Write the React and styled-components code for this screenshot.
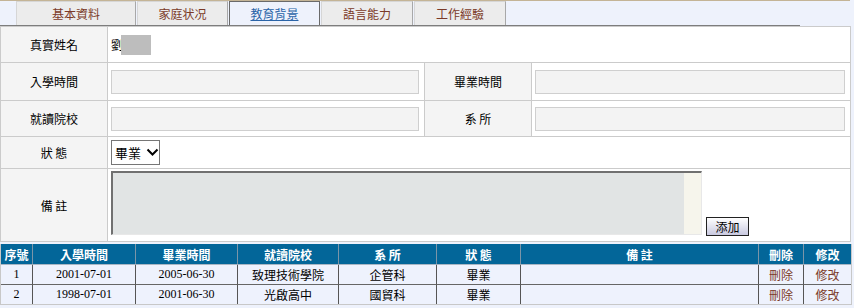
import React from "react";
import styled, { createGlobalStyle } from "styled-components";

const Global = createGlobalStyle`
  html, body { margin: 0; padding: 0; }
  body {
    background: #eef2fc;
    font-family: "Noto Sans CJK TC", "Liberation Sans", sans-serif;
    font-size: 12px;
    color: #000;
  }
`;

const Page = styled.div`
  width: 850px;
  border-top: 1px solid #c4b496;
`;

const TabBar = styled.div`
  display: flex;
  gap: 1px;
  width: 784px;
  height: 24px;
  padding-left: 16px;
  border-bottom: 1px solid #7d7d7d;
`;

const Tab = styled.div`
  box-sizing: border-box;
  width: ${(p) => p.$w}px;
  height: 24px;
  display: flex;
  align-items: center;
  justify-content: center;
  font-size: 12px;
  background: ${(p) => (p.$active ? "#eef2fc" : "#ececec")};
  border: 1px solid ${(p) => (p.$active ? "#6a6a6a" : "#d6d6d6")};
  border-right-color: ${(p) => (p.$active ? "#6a6a6a" : "#a8a8a8")};
  border-bottom: none;
  color: ${(p) => (p.$active ? "#2a64a8" : "#7b3a28")};
  text-decoration: ${(p) => (p.$active ? "underline" : "none")};
`;

const FormTable = styled.table`
  width: 850px;
  border-collapse: collapse;
  background: #fff;
  table-layout: fixed;
  td {
    border: 1px solid #cbcbcb;
    padding: 0;
  }
`;

const Label = styled.td`
  background: #f4f4f4;
  text-align: center;
  height: ${(p) => p.$h}px;
  font-size: 12px;
`;

const Value = styled.td`
  padding: 0 0 0 3px !important;
  vertical-align: ${(p) => p.$valign || "middle"};
`;

const TextInput = styled.input`
  box-sizing: border-box;
  display: block;
  width: ${(p) => p.$w}px;
  height: 24px;
  border: 1px solid #cfcfcf;
  background: #f3f3f3;
  margin: 0;
  padding: 0 4px;
`;

const NameWrap = styled.div`
  display: flex;
  align-items: center;
`;

const Redacted = styled.span`
  display: inline-block;
  width: 30px;
  height: 20px;
  margin-left: -2px;
  background: #bdbdbd;
  filter: blur(0.6px);
`;

const Select = styled.div`
  box-sizing: border-box;
  display: inline-flex;
  align-items: center;
  gap: 5px;
  width: 49px;
  height: 25px;
  padding-left: 3px;
  border: 1px solid #767676;
  background: #fff;
  font-size: 13px;
`;

const NoteRow = styled.div`
  display: flex;
  align-items: flex-end;
  gap: 4px;
  padding: 2px 0 2px;
`;

const NoteBox = styled.div`
  box-sizing: border-box;
  display: flex;
  width: 591px;
  height: 64px;
  border: 1px solid #e8e8e8;
  border-top: 2px solid #707070;
  border-left: 2px solid #707070;
`;

const Note = styled.textarea`
  flex: 1;
  margin: 0;
  padding: 2px;
  resize: none;
  border: none;
  outline: none;
  background: #e1e4e4;
`;

const ScrollTrack = styled.div`
  width: 17px;
  background: #f6f5ec;
`;

const AddButton = styled.button`
  box-sizing: border-box;
  width: 43px;
  height: 19px;
  padding: 0;
  margin-bottom: -1px;
  border: 1px solid #222;
  background: linear-gradient(#ffffff, #c9c9e0);
  font-family: "Noto Sans CJK TC", sans-serif;
  font-size: 12px;
  line-height: 16px;
  color: #000;
`;

const ListTable = styled.table`
  margin-top: 2px;
  width: 850px;
  table-layout: fixed;
  border-collapse: separate;
  border-spacing: 0;
  border: 1px solid #c8c8c8;
  border-top: none;
`;

const Th = styled.th`
  background: #036699;
  color: #fff;
  font-weight: bold;
  font-size: 12px;
  height: 20px;
  padding: 0;
  border-right: 1px solid #7b95a8;
  border-bottom: 1px solid #a9b6c4;
  &:last-child { border-right: none; }
`;

const Td = styled.td`
  background: #eef2fd;
  height: 19px;
  padding: 0;
  text-align: center;
  font-size: 12px;
  font-family: ${(p) =>
    p.$serif
      ? '"Liberation Serif", "Noto Sans CJK TC", serif'
      : '"Noto Sans CJK TC", sans-serif'};
  color: ${(p) => (p.$link ? "#7b3a28" : "#000")};
  border-right: 1px solid #555;
  border-bottom: ${(p) => (p.$last ? "none" : "1px solid #666")};
  &:last-child { border-right: none; }
`;

const tabs = [
  { t: "基本資料", w: 120 },
  { t: "家庭状况", w: 91 },
  { t: "教育背景", w: 91, active: true },
  { t: "語言能力", w: 92 },
  { t: "工作經驗", w: 92 },
];

const cols = [32, 103, 102, 101, 98, 84, 238, 45, 47];
const heads = ["序號", "入學時間", "畢業時間", "就讀院校", "系 所", "狀 態", "備 註", "刪除", "修改"];
const rows = [
  ["1", "2001-07-01", "2005-06-30", "致理技術學院", "企管科", "畢業"],
  ["2", "1998-07-01", "2001-06-30", "光啟高中", "國貿科", "畢業"],
];

export default function App() {
  return (
    <Page>
      <Global />
      <TabBar>
        {tabs.map((t) => (
          <Tab key={t.t} $w={t.w} $active={t.active}>
            {t.t}
          </Tab>
        ))}
      </TabBar>
      <FormTable>
        <colgroup>
          <col style={{ width: 107 }} />
          <col style={{ width: 317 }} />
          <col style={{ width: 107 }} />
          <col style={{ width: 319 }} />
        </colgroup>
        <tbody>
          <tr>
            <Label $h={35}>真實姓名</Label>
            <Value colSpan={3}>
              <NameWrap>
                <span>劉</span>
                <Redacted />
              </NameWrap>
            </Value>
          </tr>
          <tr>
            <Label $h={37}>入學時間</Label>
            <Value>
              <TextInput $w={308} />
            </Value>
            <Label>畢業時間</Label>
            <Value>
              <TextInput $w={310} />
            </Value>
          </tr>
          <tr>
            <Label $h={35}>就讀院校</Label>
            <Value>
              <TextInput $w={308} />
            </Value>
            <Label>系 所</Label>
            <Value>
              <TextInput $w={310} />
            </Value>
          </tr>
          <tr>
            <Label $h={31}>狀 態</Label>
            <Value colSpan={3}>
              <Select>
                <span>畢業</span>
                <svg width="13" height="9" viewBox="0 0 13 9">
                  <path d="M1.5 1.5 L6.5 6.5 L11.5 1.5" fill="none" stroke="#000" strokeWidth="2" />
                </svg>
              </Select>
            </Value>
          </tr>
          <tr>
            <Label $h={72}>備 註</Label>
            <Value colSpan={3} $valign="top">
              <NoteRow>
                <NoteBox>
                  <Note />
                  <ScrollTrack />
                </NoteBox>
                <AddButton>添加</AddButton>
              </NoteRow>
            </Value>
          </tr>
        </tbody>
      </FormTable>
      <ListTable>
        <colgroup>
          {cols.map((w, i) => (
            <col key={i} style={{ width: w }} />
          ))}
        </colgroup>
        <thead>
          <tr>
            {heads.map((h) => (
              <Th key={h}>{h}</Th>
            ))}
          </tr>
        </thead>
        <tbody>
          {rows.map((r, ri) => {
            const last = ri === rows.length - 1;
            return (
              <tr key={ri}>
                <Td $serif $last={last}>{r[0]}</Td>
                <Td $serif $last={last}>{r[1]}</Td>
                <Td $serif $last={last}>{r[2]}</Td>
                <Td $last={last}>{r[3]}</Td>
                <Td $last={last}>{r[4]}</Td>
                <Td $last={last}>{r[5]}</Td>
                <Td $last={last}></Td>
                <Td $link $last={last}>刪除</Td>
                <Td $link $last={last}>修改</Td>
              </tr>
            );
          })}
        </tbody>
      </ListTable>
    </Page>
  );
}
